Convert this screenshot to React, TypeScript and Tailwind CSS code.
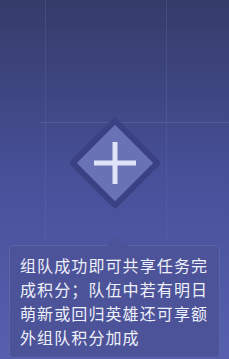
const lines = ["组队成功即可共享任务完", "成积分；队伍中若有明日", "萌新或回归英雄还可享额", "外组队积分加成"]

const App = () => {
  return (
    <div className="relative h-[359px] w-[229px] overflow-hidden bg-gradient-to-b from-[#353c69] via-[#48509a] to-[#5660ad] font-['Noto_Sans_CJK_SC',sans-serif]">
      {/* faint backdrop grid */}
      <div className="absolute left-[45px] top-0 h-[240px] w-px bg-[#6a74b8]/25" />
      <div className="absolute left-[166px] top-0 h-[240px] w-px bg-[#6a74b8]/25" />
      <div className="absolute left-[40px] top-[122px] h-px w-[189px] bg-[#7b84c4]/30" />

      <div className="relative flex flex-col items-center px-[9px] pt-[130px]">
        <div className="flex h-[66px] w-[66px] rotate-45 items-center justify-center rounded-[4px] border-[6px] border-[#3b4283] bg-[#6a72b6]">
          <div className="-rotate-45">
            <svg width="44" height="44" viewBox="0 0 44 44">
              <rect x="1" y="19.5" width="42" height="5" fill="#dfe3f7" />
              <rect x="19.5" y="1" width="5" height="42" fill="#dfe3f7" />
            </svg>
          </div>
        </div>

        <div className="relative mt-[49px] w-full">
          <svg className="absolute -top-[9px] left-[98px]" width="22" height="10" viewBox="0 0 22 10">
            <path d="M0 10 L6 0 L22 10 Z" fill="#4c5398" />
          </svg>
          <div className="rounded-[5px] border border-[#5c64aa] bg-[#4c5398] px-[10px] pb-[8px] pt-[7px] text-[16px] leading-[24px] tracking-[1.1px] text-[#eef0fb]">
            {lines.map((line) => (
              <div key={line} className="whitespace-nowrap">
                {line}
              </div>
            ))}
          </div>
        </div>
      </div>
    </div>
  )
}

export default App
